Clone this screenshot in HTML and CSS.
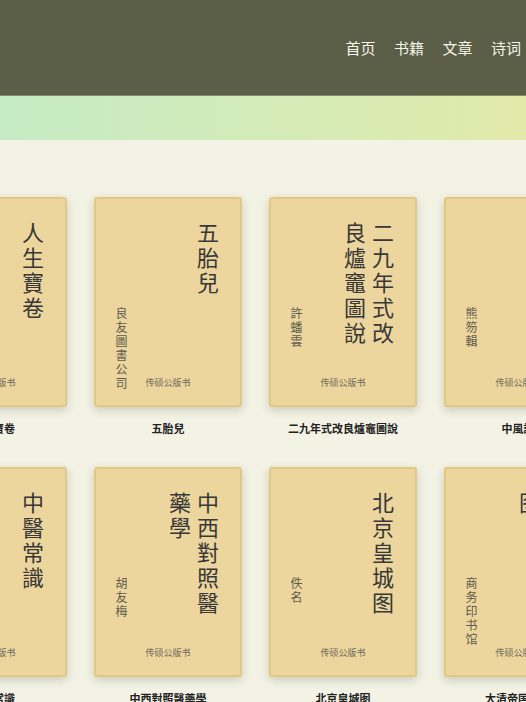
FILE: index.html
```html
<!DOCTYPE html>
<html lang="zh">
<head>
<meta charset="utf-8">
<title>传硕公版书</title>
<link rel="stylesheet" href="styles.css">
</head>
<body>
<header class="site-header">
  <nav class="nav">
    <a href="#">首页</a>
    <a href="#">书籍</a>
    <a href="#">文章</a>
    <a href="#">诗词</a>
  </nav>
</header>
<div class="banner"></div>
<main class="main">
  <div class="shelf">
    <div class="book">
      <div class="cover">
        <div class="title">人生寶卷</div>
        <div class="author">佚名</div>
        <div class="publisher">传硕公版书</div>
      </div>
      <div class="caption">人生寶卷</div>
    </div>
    <div class="book">
      <div class="cover">
        <div class="title">五胎兒</div>
        <div class="author">良友圖書公司</div>
        <div class="publisher">传硕公版书</div>
      </div>
      <div class="caption">五胎兒</div>
    </div>
    <div class="book">
      <div class="cover">
        <div class="title">二九年式改良爐竈圖說</div>
        <div class="author">許蟠雲</div>
        <div class="publisher">传硕公版书</div>
      </div>
      <div class="caption">二九年式改良爐竈圖說</div>
    </div>
    <div class="book">
      <div class="cover">
        <div class="title">中風論</div>
        <div class="author">熊笏輯</div>
        <div class="publisher">传硕公版书</div>
      </div>
      <div class="caption">中風論</div>
    </div>
    <div class="book">
      <div class="cover">
        <div class="title">中醫常識</div>
        <div class="author">佚名</div>
        <div class="publisher">传硕公版书</div>
      </div>
      <div class="caption">中醫常識</div>
    </div>
    <div class="book">
      <div class="cover">
        <div class="title">中西對照醫藥學</div>
        <div class="author">胡友梅</div>
        <div class="publisher">传硕公版书</div>
      </div>
      <div class="caption">中西對照醫藥學</div>
    </div>
    <div class="book">
      <div class="cover">
        <div class="title">北京皇城图</div>
        <div class="author">佚名</div>
        <div class="publisher">传硕公版书</div>
      </div>
      <div class="caption">北京皇城图</div>
    </div>
    <div class="book">
      <div class="cover">
        <div class="title">大清帝国全图</div>
        <div class="author">商务印书馆</div>
        <div class="publisher">传硕公版书</div>
      </div>
      <div class="caption">大清帝国全图</div>
    </div>
  </div>
</main>
</body>
</html>
```
FILE: styles.css
```css
html, body {
  margin: 0;
  padding: 0;
  overflow-x: hidden;
}
body {
  background: #f3f3e5;
  font-family: "Noto Sans CJK SC", "Noto Sans", sans-serif;
  color: #333;
}
.site-header {
  height: 95px;
  background: #5b5e46;
  border-bottom: 1px solid #878b69;
  display: flex;
  align-items: center;
  justify-content: flex-end;
  padding-right: 5px;
}
.nav {
  display: flex;
  gap: 18.5px;
}
.nav a {
  color: #f4f4ea;
  text-decoration: none;
  font-size: 15px;
  line-height: 20px;
}
.banner {
  height: 44px;
  background: linear-gradient(90deg, #c5ebc5 0%, #d3ebb8 50%, #e2eaaa 100%);
}
.main {
  padding-top: 57px;
  padding-bottom: 40px;
}
.shelf {
  display: grid;
  grid-template-columns: repeat(4, 148px);
  column-gap: 27px;
  row-gap: 32px;
  margin-left: -81px;
}
.book {
  display: flex;
  flex-direction: column;
  align-items: center;
}
.cover {
  box-sizing: border-box;
  width: 148px;
  height: 210px;
  background: #ecd69d;
  border: 2px solid #e2c883;
  border-radius: 3px;
  box-shadow: 0 3px 10px rgba(0, 0, 0, 0.18);
  padding: 23px 18px 16px 18px;
  display: grid;
  grid-template-columns: 1fr auto;
  grid-template-rows: minmax(0, 1fr) auto;
}
.title {
  grid-column: 2;
  grid-row: 1;
  align-self: start;
  writing-mode: vertical-rl;
  font-size: 22px;
  line-height: 28px;
  letter-spacing: 3px;
  max-height: 128px;
  color: #383838;
}
.author {
  grid-column: 1;
  grid-row: 1 / 3;
  align-self: start;
  justify-self: start;
  margin-top: 85px;
  writing-mode: vertical-rl;
  white-space: nowrap;
  font-size: 12px;
  line-height: 14px;
  letter-spacing: 2px;
  color: #5e5a4c;
}
.publisher {
  grid-column: 1 / 3;
  grid-row: 2;
  text-align: center;
  font-size: 9px;
  line-height: 12px;
  color: #6f6a5c;
}
.caption {
  margin-top: 14px;
  font-size: 11px;
  line-height: 14px;
  font-weight: bold;
  color: #222;
  white-space: nowrap;
}
```
